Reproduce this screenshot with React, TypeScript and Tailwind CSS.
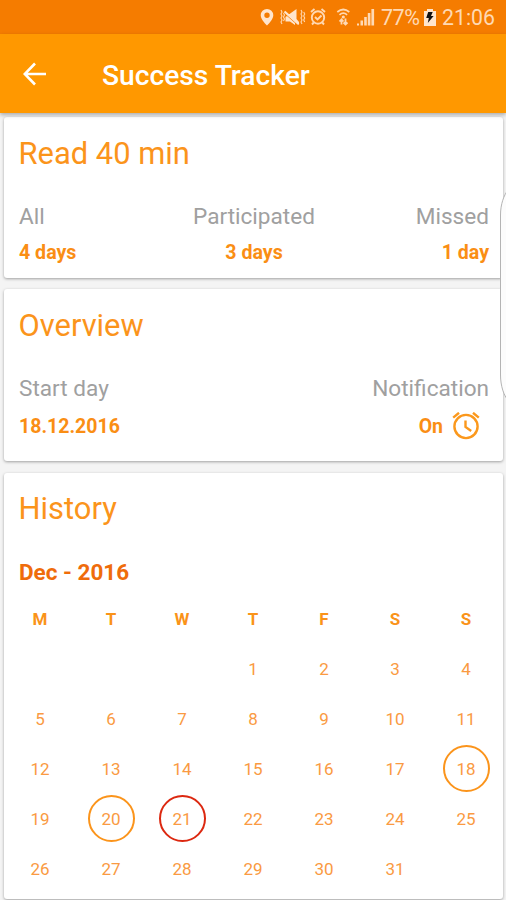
import type { ReactNode } from "react";

const weekdays = ["M", "T", "W", "T", "F", "S", "S"];
const days = Array.from({ length: 31 }, (_, i) => i + 1);
const completed = [18, 20];
const missed = [21];

function StatusBar() {
  return (
    <div className="flex h-[34px] items-center bg-[#f57c00] text-[#ffd9b3]">
      <svg className="ml-[260px] h-[34px] w-[116px] shrink-0" viewBox="260 0 116 34" fill="none" stroke="currentColor">
        <path fill="#ffe5cc" stroke="none" fillRule="evenodd" d="M267 9a6.3 6.3 0 0 0-6.3 6.3c0 4.5 6.3 10.3 6.3 10.3s6.3-5.8 6.3-10.3A6.3 6.3 0 0 0 267 9Zm0 3.5a2.7 2.7 0 1 1 0 5.4 2.7 2.7 0 0 1 0-5.4Z" />
        <path fill="#ffe5cc" stroke="none" d="M285.5 13.5 299 25v-3l-2.5-3V9l-7 5h-3Zm0 3.5v4.5h4.5l5 3.5v-2l-8-7Z" />
        <path stroke="#ffe5cc" strokeWidth="2.2" d="m284.5 11.5 14 12.5" />
        <path strokeWidth="1.1" d="m281 10 1 2-1 2 1 2-1 2 1 2-1 2 1 2M283.5 13l1 2-1 2 1 2-1 2M301 10l1 2-1 2 1 2-1 2 1 2-1 2 1 2M303.7 12l1 2-1 2 1 2-1 2 1 2" />
        <circle cx="318" cy="17.5" r="6.2" strokeWidth="1.9" />
        <path strokeWidth="1.9" d="m311 12 3.5-2.9m10.5 2.9-3.5-2.9M315 17l2.5 2.5 4-4M313.8 22.5l-1.8 2m10.2-2 1.8 2" />
        <path strokeWidth="1.7" d="M337.3 12q6-5 12 0M339.5 14.8q3.8-3.3 7.6 0" />
        <circle cx="343.3" cy="17" r="1.6" fill="currentColor" stroke="none" />
        <path strokeWidth="1.8" d="M341.5 19v5.5m-2-3 2-2.2 2 2.2M345.5 18.5V25m-2-2.5 2 2 2-2" />
        <path fill="currentColor" stroke="none" d="M357 23.5h2v2h-2ZM360.5 20.5h2.5v5h-2.5ZM364.2 17h2.6v8.5h-2.6ZM367.8 13h2.6v12.5h-2.6ZM371.4 9h2.7v16.5h-2.7Z" />
      </svg>
      <span className="ml-[5px] w-[39px] pt-[1px] whitespace-nowrap text-[21.5px] leading-[34px] tracking-[-0.5px]">77%</span>
      <svg className="ml-[4px] h-[17px] w-[12px] shrink-0" viewBox="0 0 12 17">
        <path fill="#ffe5cc" d="M0 2h3V0h6v2h3v15H0Z" />
        <path fill="#111111" d="M4.2 3h4.5L7 7h2.6l-5.8 7 1-5H2.2Z" />
      </svg>
      <span className="ml-[6px] pt-[1px] whitespace-nowrap text-[21.3px] leading-[34px]">21:06</span>
    </div>
  );
}

function Card({ title, className, children }: { title: string; className: string; children: ReactNode }) {
  return (
    <section className={`mr-[3px] ml-1 rounded-[3px] bg-white pr-[14px] pl-[15px] shadow-[0_1px_3px_rgba(0,0,0,0.35)] ${className}`}>
      <h2 className="-ml-[0.5px] h-[36px] text-[30.9px] leading-[36px] text-[#fb941b]">{title}</h2>
      {children}
    </section>
  );
}

function AlarmIcon() {
  return (
    <svg className="h-[28px] w-[28px]" viewBox="0 0 28 28" fill="none" stroke="#fb981c" strokeWidth="2.4">
      <circle cx="14" cy="14.5" r="11.6" />
      <path d="M1.2 5.7 7 0.8M26.8 5.7 21 0.8M13.5 8.5v6.4l5.7 4" />
    </svg>
  );
}

export default function App() {
  return (
    <main className="relative h-[900px] w-[506px] overflow-hidden bg-[#f4f4f4] font-['Roboto',sans-serif]">
      <StatusBar />
      <header className="relative flex h-[79px] items-center bg-[#ff9800] text-white shadow-[0_2px_4px_rgba(0,0,0,0.3)]">
        <svg className="ml-[23px] h-[24px] w-[24px]" viewBox="0 0 24 24" fill="none" stroke="currentColor" strokeWidth="2.6">
          <path d="M23 12H2M12 1.5 1.7 12 12 22.5" />
        </svg>
        <h1 className="ml-[55px] pt-[4px] text-[28.2px] leading-[32px] font-medium">Success Tracker</h1>
      </header>

      <Card title="Read 40 min" className="mt-1 h-[161px] pt-[19px]">
        <div className="mt-[32px] grid grid-cols-3 text-[22.6px] leading-[26px] text-[#a0a0a0]">
          <span>All</span><span className="text-center">Participated</span><span className="text-right">Missed</span>
        </div>
        <div className="mt-[10px] grid grid-cols-3 text-[19.6px] leading-[25px] font-bold text-[#fa8e14]">
          <span>4 days</span><span className="text-center">3 days</span><span className="text-right">1 day</span>
        </div>
      </Card>

      <Card title="Overview" className="mt-[11px] h-[172px] pt-[19px]">
        <div className="mt-[32px] flex justify-between text-[22.6px] leading-[26px] text-[#a0a0a0]">
          <span>Start day</span><span>Notification</span>
        </div>
        <div className="mt-[10px] flex h-[28px] items-center justify-between text-[19.5px] font-bold text-[#fa8e14]">
          <span className="pt-[1px]">18.12.2016</span>
          <span className="mr-[9px] flex items-center gap-[9px]"><span className="pt-[1px]">On</span><AlarmIcon /></span>
        </div>
      </Card>

      <Card title="History" className="mt-[12px] h-[426px] pt-[18px]">
        <h3 className="mt-[31px] text-[22.5px] leading-[28px] font-bold text-[#ef6c0b]">Dec - 2016</h3>
        <div className="mt-[8px] -mr-[14px] -ml-[15px] grid grid-cols-[repeat(7,71px)] pl-[0.5px] text-center text-[17px] font-bold text-[#fa9319]">
          {weekdays.map((day, index) => <span className="h-[50px] leading-[50px]" key={index}>{day}</span>)}
        </div>
        <div className="-mr-[14px] -ml-[15px] grid grid-cols-[repeat(7,71px)] pl-[0.5px] text-center text-[17px] text-[#fa9a42]">
          {days.map((day) => (
            <div className={`flex h-[50px] items-center justify-center ${day === 1 ? "col-start-4" : ""}`} key={day}>
              <span className={`flex h-[47px] w-[47px] shrink-0 -translate-y-px items-center justify-center rounded-full pt-[3px] ${completed.includes(day) ? "border-2 border-[#fb941b]" : missed.includes(day) ? "border-2 border-[#dc2810]" : ""}`}>
                {day}
              </span>
            </div>
          ))}
        </div>
      </Card>

      <svg className="absolute top-[188px] left-[498px] h-[216px] w-[8px]" viewBox="0 0 8 216" fill="#fcfcfc" stroke="#b4b4b4">
        <path d="M10 2C6 7 2.5 16 2.5 27v160c0 11 3.5 21 7.5 25" />
      </svg>
    </main>
  );
}
